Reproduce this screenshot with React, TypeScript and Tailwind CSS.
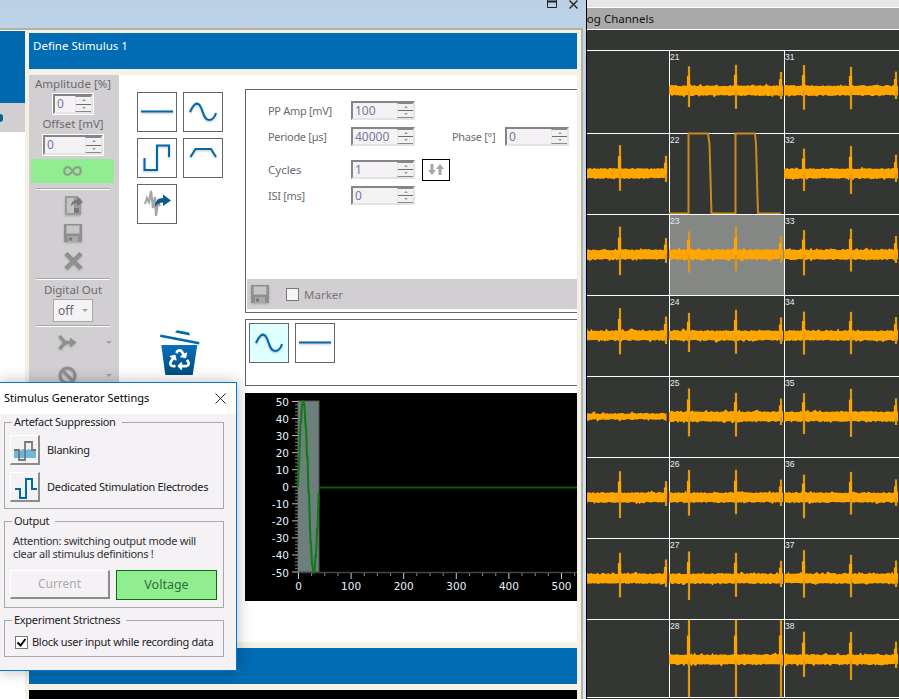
import React from 'react';
import { FaRecycle } from 'react-icons/fa';

const BLUE = '#0068ad';

// seeded noise so that every channel keeps the same trace between renders
const rng = (seed: number) => {
  let s = seed * 9301 + 49297;
  return () => {
    s = (s * 9301 + 49297) % 233280;
    return s / 233280;
  };
};

const bandPath = (seed: number, from: number, to: number, y: number, half: number) => {
  const r = rng(seed);
  const top: string[] = [];
  const bottom: string[] = [];
  for (let x = from; x <= to; x += 1.5) {
    const bump = r() > 0.9 ? 1.5 : 0;
    top.push(`${x} ${(y - half - r() * 1.4 - bump).toFixed(1)}`);
    bottom.push(`${x} ${(y + half + r() * 1.4 + (r() > 0.92 ? 1.5 : 0)).toFixed(1)}`);
  }
  return `M${top.join('L')}L${bottom.reverse().join('L')}Z`;
};

const Trace = ({ seed, spikes, from, to, flat, huge }: { seed: number; spikes: number[]; from: number; to: number; flat?: boolean; huge?: boolean }) => {
  const r = rng(seed + 7);
  return (
    <svg width="100%" height="100%" className="block overflow-visible">
      <path d={bandPath(seed, from, to, 39.5, flat ? 2.4 : 4.2)} fill="#ffa500" />
      {spikes.map((x, i) => {
        const last = i === spikes.length - 1 && x > 75;
        const up = huge ? 39 : last ? 15 + r() * 4 : 22 + r() * 6;
        const down = huge ? 38 : last ? 9 : 17 + r() * 5;
        return (
          <g key={x}>
            <path d={`M${x} ${39 - up}V${39 + down}`} stroke="#e0980f" strokeWidth="2.2" />
            <path d={`M${x - 0.5} ${39 - up * 0.6}V40`} stroke="#ffa500" strokeWidth="3.2" />
          </g>
        );
      })}
    </svg>
  );
};

const DigitalTrace = () => (
  <svg width="100%" height="100%" className="block overflow-visible">
    <path
      d="M-1 79.5H18.5V-0.5H38L39.5 10L41.5 79.5H65.5V-0.5H85L86 10L88 79.5H111"
      fill="none"
      stroke="#c98a1c"
      strokeWidth="2"
    />
  </svg>
);

const rowHeights = [83, 81, 81, 81, 81, 81, 81, 78];

const Channel = ({ n, col, row, active }: { n?: number; col: number; row: number; active?: boolean }) => {
  const spikes = col === 0 ? [33, 79] : [19, 66, 111];
  const empty = col === 0 && (row === 0 || row === 7);
  return (
    <div
      className={`relative border-t border-white ${col > 0 ? 'border-l' : ''} ${active ? 'bg-[#858785]' : ''}`}
      style={{ height: rowHeights[row] }}
    >
      {n === 22 ? (
        <DigitalTrace />
      ) : empty ? null : (
        <Trace
          seed={row * 31 + col * 17 + 3}
          spikes={col === 0 && row === 4 ? [] : spikes}
          from={col === 0 ? 0 : -1}
          to={col === 0 ? 80 : 114}
          flat={col === 0 && row === 4}
          huge={n === 28}
        />
      )}
      {n && <span className="absolute left-[0px] top-[1px] font-['Liberation_Sans',sans-serif] text-[8.5px] leading-[11px] text-[#e6eef5]">{n}</span>}
    </div>
  );
};

const Spin = ({ value, w, white }: { value: string; w: number; white?: boolean }) => (
  <div
    className={`flex h-full border-2 border-t-[#858585] border-l-[#858585] border-r-[#e4e4e4] border-b-[#e4e4e4] ${white ? 'outline outline-white' : ''}`}
    style={{ width: w }}
  >
    <div className="flex-1 bg-[#f5f2f6] pl-[2px] text-[12px] leading-[15px] tracking-normal text-[#77779a]">{value}</div>
    <div className="flex w-[16px] flex-col border-y border-l border-[#8a8a8a] border-l-[#e8e8e8] bg-[#f2f0f2]">
      <div className="flex flex-1 items-center justify-center border-b border-[#6e6e6e]">
        <div className="h-0 w-0 border-x-[2px] border-b-[2px] border-x-transparent border-b-[#999]" />
      </div>
      <div className="flex flex-1 items-center justify-center">
        <div className="h-0 w-0 border-x-[2px] border-t-[2px] border-x-transparent border-t-[#999]" />
      </div>
    </div>
  </div>
);

const WaveBtn = ({ children, active }: { children: React.ReactNode; active?: boolean }) => (
  <div className={`h-[40px] w-[40px] border border-[#666] ${active ? 'bg-[#e0ffff]' : 'bg-white'}`}>
    <svg width="38" height="38" viewBox="1 1 38 38" fill="none" stroke={BLUE} strokeWidth="2" className="drop-shadow-[0_1px_1px_rgba(0,0,0,0.25)]">
      {children}
    </svg>
  </div>
);

const lineIcon = <path d="M4 19.5H36" />;
const sineIcon = <path d="M7 20C10 13 13 10 16 12.5C20 16 20 28 26 28C29 28 32 25 33 21" />;
const squareIcon = <path d="M7.5 20V32H20V7.5H32V19" />;
const trapIcon = <path d="M7.5 19L12.5 11H28L33 19" />;

const soft = 'drop-shadow-[0_1px_1px_rgba(0,0,0,0.2)]';

const Floppy = ({ className }: { className?: string }) => (
  <svg width="18" height="18" viewBox="0 0 18 18" className={`${soft} ${className ?? ''}`}>
    <rect width="18" height="18" fill="#8f8f8f" />
    <rect x="2.5" y="1.5" width="13" height="8" fill="#c6c6c8" />
    <rect x="4" y="12" width="10" height="6" fill="#a8a8a8" />
    <rect x="5" y="13.5" width="3" height="3" fill="#777" />
  </svg>
);

const SmallArrow = () => <div className="h-0 w-0 border-x-[3px] border-t-[3px] border-x-transparent border-t-[#a2a2a2]" />;

const Separator = () => <div className="h-[2px] w-[74px] border-t border-[#a8a8a8] bg-white" />;

const Sidebar = () => (
  <div className="flex w-[90px] shrink-0 flex-col items-center bg-[#d1cfd2] pr-[2px] pt-[2px] text-[11.5px] leading-[14px] text-[#6d6a6f]">
    <div>Amplitude [%]</div>
    <div className="mt-[3px] h-[20px]"><Spin value="0" w={40} white /></div>
    <div className="mt-[3px]">Offset [mV]</div>
    <div className="mt-[4px] h-[20px]"><Spin value="0" w={60} white /></div>
    <div className="ml-[2px] mt-[4px] flex h-[24px] w-[83px] items-center justify-center self-start bg-[#90ee90]">
      <svg width="19" height="10" viewBox="0 0 19 10" fill="none" stroke="#8f9f8f" strokeWidth="2.2">
        <path d="M9.5 5C7.5 2 6.5 1.2 5 1.2C2.8 1.2 1.2 2.8 1.2 5S2.8 8.8 5 8.8C6.5 8.8 7.5 8 9.5 5C11.5 2 12.5 1.2 14 1.2C16.2 1.2 17.8 2.8 17.8 5S16.2 8.8 14 8.8C12.5 8.8 11.5 8 9.5 5Z" />
      </svg>
    </div>
    <div className="mt-[5px]"><Separator /></div>
    <svg width="19" height="21" viewBox="0 0 19 21" className={`mt-[5px] ${soft}`}>
      <path d="M1 1H13L17 4V20H1Z" fill="#9a9a9a" />
      <path d="M3 3H10V18H3Z" fill="#c4c4c6" />
      <path d="M7 11C7 7 10 5 13 5V2L19 7L13 11V8C11 8 9 9 7 11Z" fill="#777" />
      <rect x="10" y="13" width="5" height="5" fill="#777" />
    </svg>
    <Floppy className="mt-[8px]" />
    <svg width="19" height="18" viewBox="0 0 19 18" className={`mt-[10px] ${soft}`} stroke="#8f8f8f" strokeWidth="4.4">
      <path d="M2 1.5L17 16.5M17 1.5L2 16.5" />
    </svg>
    <div className="mt-[8px]"><Separator /></div>
    <div className="mt-[3px]">Digital Out</div>
    <div className="mt-[2px] flex h-[23px] w-[40px] items-center justify-between border border-[#a9a9a9] bg-[#f5f2f6] pl-[4px] pr-[4px]">
      <span className="text-[12px] text-[#6a6a6a]">off</span>
      <SmallArrow />
    </div>
    <div className="mt-[3px]"><Separator /></div>
    <div className="mt-[7px] flex w-full items-center pl-[29px]">
      <svg width="19" height="17" viewBox="0 0 19 17" fill="none" stroke="#8f8f8f" strokeWidth="3.4" className={soft}>
        <path d="M1.5 2L7 8.5L1.5 15M7 8.5H13" />
        <path d="M12 3.5L18.5 8.5L12 13.5Z" fill="#8f8f8f" stroke="none" />
      </svg>
      <div className="ml-[29px]"><SmallArrow /></div>
    </div>
    <div className="mt-[15px] flex w-full items-center pl-[29px]">
      <svg width="19" height="19" viewBox="0 0 19 19" fill="none" stroke="#8f8f8f" strokeWidth="3" className={soft}>
        <circle cx="9.5" cy="9.5" r="7.5" />
        <path d="M4.5 4.5L14.5 14.5" />
      </svg>
      <div className="ml-[29px]"><SmallArrow /></div>
    </div>
  </div>
);

const Row = ({ label, value, top, wide, children }: { label: string; value: string; top: number; wide?: boolean; children?: React.ReactNode }) => (
  <div className="flex h-[19px] shrink-0 items-center text-[#6d6a6f]" style={{ marginTop: top }}>
    <div className={`w-[83px] pt-[1px] ${wide ? 'text-[11.5px]' : 'text-[11px] tracking-[-0.3px]'}`}>{label}</div>
    <Spin value={value} w={64} />
    {children}
  </div>
);

const StimulusPanel = () => (
  <div className="flex h-[224px] flex-col border-y border-l border-[#666] pl-[1px]">
    <div className="flex flex-col pl-[21px]">
      <Row label="PP Amp [mV]" value="100" top={11} />
      <Row label="Periode [µs]" value="40000" top={7}>
        <div className="ml-[37px] w-[53px] pt-[1px] text-[11px] tracking-[-0.3px]">Phase [°]</div>
        <Spin value="0" w={64} />
      </Row>
      <Row label="Cycles" value="1" top={14} wide>
        <div className="ml-[7px] flex h-[22px] w-[28px] items-center justify-center border border-black">
          <svg width="16" height="11" viewBox="0 0 16 11" fill="#a8a8a8">
            <path d="M2.5 0H5.5V6H8L4 11L0 6H2.5Z" />
            <path d="M10.5 11H13.5V5H16L12 0L8 5H10.5Z" />
          </svg>
        </div>
      </Row>
      <Row label="ISI [ms]" value="0" top={7} />
    </div>
    <div className="mb-[3px] mt-auto flex h-[30px] items-center bg-[#d1cfd2] pl-[4px]">
      <Floppy />
      <div className="ml-[17px] h-[13px] w-[13px] border border-[#777] bg-[#f5f5f5]" />
      <span className="ml-[5px] pt-[1px] text-[11.5px] text-[#787578]">Marker</span>
    </div>
  </div>
);

const sineY = (x: number) => 94 - 85.5 * Math.sin((Math.round(x * 1.4) / 1.4 / 21) * Math.PI * 2);
const sinePoints = Array.from({ length: 43 }, (_, i) => `${(53 + i / 2).toFixed(1)},${sineY(i / 2).toFixed(1)}`).join(' ');
const yTicks = [50, 40, 30, 20, 10, 0, -10, -20, -30, -40, -50];
const xTicks = [0, 100, 200, 300, 400, 500];

const Chart = () => (
  <div className="mt-[7px] h-[208px] bg-black">
    <svg width="332" height="208" className="block font-['DejaVu_Sans',sans-serif] text-[10.5px]">
      <rect x="53" y="8" width="21" height="171" fill="#6c7f7c" stroke="#555" />
      <path d="M53 179.5H332" stroke="#444" strokeWidth="1.5" />
      <path d="M53.5 8V180" stroke="#777" />
      {Array.from({ length: 51 }, (_, i) => (
        <path key={i} d={`M${i % 5 === 0 ? 47 : 50} ${8.5 + i * 3.41}H53`} stroke={i % 5 === 0 ? '#bbb' : '#777'} />
      ))}
      {Array.from({ length: 22 }, (_, i) => (
        <path key={i} d={`M${53.5 + i * 13.15} 180V${i % 4 === 0 ? 186 : 183}`} stroke={i % 4 === 0 ? '#ccc' : '#888'} />
      ))}
      {yTicks.map((v, i) => (
        <text key={v} x="44" y={12.5 + i * 17.1} textAnchor="end" fill="#eaf2ff">{v}</text>
      ))}
      {xTicks.map((v, i) => (
        <text key={v} x={53.5 + i * 52.6} y="197" textAnchor="middle" fill="#eaf2ff">{v}</text>
      ))}
      <polyline points={sinePoints} fill="none" stroke="#0b7d12" strokeWidth="2" />
      <path d="M74 94.5H332" stroke="#0a5c0a" strokeWidth="2" />
    </svg>
  </div>
);

const Trash = () => (
  <svg width="40" height="46" viewBox="0 0 40 46" className="ml-[23px] mt-[106px]">
    <defs>
      <linearGradient id="bin" x1="0" y1="0" x2="0" y2="1">
        <stop offset="0" stopColor="#0a70ba" />
        <stop offset="1" stopColor="#014e80" />
      </linearGradient>
    </defs>
    <path d="M0.5 4.5L39.5 12L39 14.5L0 7Z" fill={BLUE} />
    <path d="M15 2.5L17 0.3L29 2.5L30 5.5Z" fill={BLUE} />
    <path d="M1.3 15H37.3L32.7 45H5.3Z" fill="url(#bin)" />
    <FaRecycle x={9} y={19} size={21} color="#fff" />
  </svg>
);

const Group = ({ title, className, children }: { title: string; className: string; children: React.ReactNode }) => (
  <fieldset className={`border border-[#a8a8a8] ${className}`}>
    <legend className="ml-[7px] pl-[2px] pr-[6px] leading-[14px] text-[#222]">{title}</legend>
    {children}
  </fieldset>
);

const RaisedBtn = ({ children }: { children: React.ReactNode }) => (
  <div className="h-[30px] w-[30px] border border-b-2 border-r-2 border-white border-b-[#8c8c8c] border-r-[#8c8c8c] bg-[#f5f2f6]">
    <svg width="28" height="28" viewBox="1 1 28 28" fill="none">{children}</svg>
  </div>
);

const SettingsDialog = () => (
  <div className="absolute left-[-1px] top-[382px] w-[238px] border border-[#0078d7] bg-[#f5f2f6] font-['Noto_Sans',sans-serif] text-[11px] tracking-[-0.3px] text-[#222] shadow-[0_0_14px_rgba(0,0,0,0.28)]">
    <div className="flex h-[31px] items-center justify-between bg-white pl-[4px] pr-[10px]">
      <span className="tracking-normal text-black">Stimulus Generator Settings</span>
      <svg width="11" height="11" viewBox="0 0 11 11" stroke="#222" strokeWidth="1">
        <path d="M0.5 0.5L10.5 10.5M10.5 0.5L0.5 10.5" />
      </svg>
    </div>
    <div className="flex flex-col gap-[5px] pb-[13px] pl-[4px] pr-[12px] pt-[1px]">
      <Group title="Artefact Suppression" className="h-[94px]">
        <div className="mt-[6px] flex items-center pl-[5px]">
          <RaisedBtn>
            <path d="M4 15L7 14L10 15.5L13 14L16 15L19 14L22 15L26 14V23H4Z" fill="#6fb8d8" />
            <path d="M4 15H9V25H15V7H22V15H26" stroke="#777" strokeWidth="1.8" />
          </RaisedBtn>
          <span className="ml-[7px] pt-[1px]">Blanking</span>
        </div>
        <div className="mt-[7px] flex items-center pl-[5px]">
          <RaisedBtn>
            <path d="M5 17H10V26H16V7H22V17H27" stroke={BLUE} strokeWidth="2" />
          </RaisedBtn>
          <span className="ml-[7px] whitespace-nowrap pt-[1px]">Dedicated Stimulation Electrodes</span>
        </div>
      </Group>
      <Group title="Output" className="h-[94px]">
        <div className="mt-[6px] pl-[8px] leading-[13px] text-[#333]">
          Attention: switching output mode will<br />clear all stimulus definitions !
        </div>
        <div className="mt-[10px] flex gap-[6px] pl-[5px] tracking-normal">
          <div className="flex h-[29px] w-[100px] items-center justify-center border border-b-2 border-r-2 border-white border-b-[#8c8c8c] border-r-[#8c8c8c] text-[12px] text-[#aaa]">Current</div>
          <div className="flex h-[30px] w-[101px] items-center justify-center border border-[#0f6b0f] bg-[#90ee90] pt-[1px] text-[12.5px] text-[#2f6f3a]">Voltage</div>
        </div>
      </Group>
      <Group title="Experiment Strictness" className="h-[44px]">
        <div className="mt-[7px] flex items-center pl-[10px]">
          <div className="flex h-[13px] w-[13px] shrink-0 items-center justify-center border border-[#777] bg-white">
            <svg width="11" height="11" viewBox="0 0 11 11" fill="none" stroke="#000" strokeWidth="2">
              <path d="M1.5 5.5L4.5 8.5L9.5 2" />
            </svg>
          </div>
          <span className="ml-[4px] whitespace-nowrap">Block user input while recording data</span>
        </div>
      </Group>
    </div>
  </div>
);

const LeftWindow = () => (
  <div className="flex w-[586px] shrink-0 flex-col overflow-hidden bg-gradient-to-b from-[#bdd1e6] to-[#d8e8f8] font-['Noto_Sans',sans-serif]">
    <div className="flex h-[28px] shrink-0 items-start justify-end gap-[12px] pr-[8px]">
      <svg width="10" height="8" viewBox="0 0 10 8" fill="none" stroke="#222" strokeWidth="1"><path d="M0.5 0V7.5H9.5V0" /><path d="M0 1.5H10" strokeWidth="2" /></svg>
      <svg width="9" height="9" viewBox="0 0 9 9" stroke="#222" strokeWidth="1.4"><path d="M0.5 0.5L8.5 8.5M8.5 0.5L0.5 8.5" /></svg>
    </div>
    <div className="mr-[3px] flex h-[671px] border-r-2 border-t-2 border-[#b8b09c] bg-white">
      <div className="flex w-[25px] shrink-0 flex-col pt-[1px]">
        <div className="h-[72px] bg-[#0068ad]" />
        <div className="flex h-[29px] items-center bg-[#d1cfd2]">
          <div className="h-[8px] w-[3px] rounded-r bg-[#0a5f94]" />
        </div>
      </div>
      <div className="flex min-w-0 flex-1 flex-col bg-[#f5f1e6] px-[4px] pt-[3px]">
        <div className="h-[36px] shrink-0 bg-[#006cb3] pl-[4px] pt-[5px] text-[11.5px] leading-[16px] text-white">Define Stimulus 1</div>
        <div className="mt-[6px] flex h-[567px] shrink-0 bg-white">
          <Sidebar />
          <div className="w-[126px] shrink-0 pl-[18px] pt-[17px]">
            <div className="grid w-[86px] grid-cols-2 gap-[6px]">
              <WaveBtn>{lineIcon}</WaveBtn>
              <WaveBtn>{sineIcon}</WaveBtn>
              <WaveBtn>{squareIcon}</WaveBtn>
              <WaveBtn>{trapIcon}</WaveBtn>
              <div className="h-[40px] w-[40px] border border-[#666]">
                <svg width="38" height="38" viewBox="1 1 38 38">
                  <path d="M8 20L10 14L12 18L14 7L16 24L18 13L19 32L21 18L23 22" fill="none" stroke="#a5a5a5" strokeWidth="2.2" />
                  <path d="M18 23C18 17 21 14 26 14V10.5L34 16.5L26 22V18.5C23 18.5 20 20 18 23Z" fill="#0a5a8e" />
                </svg>
              </div>
            </div>
            <Trash />
          </div>
          <div className="min-w-0 flex-1 overflow-hidden pt-[14px]">
            <StimulusPanel />
            <div className="mt-[6px] flex h-[67px] gap-[6px] border-y border-l border-[#666] pl-[3px] pt-[3px]">
              <WaveBtn active>{sineIcon}</WaveBtn>
              <WaveBtn>{lineIcon}</WaveBtn>
            </div>
            <Chart />
          </div>
        </div>
        <div className="mt-[6px] h-[36px] shrink-0 bg-[#006cb3]" />
        <div className="mt-[6px] h-[20px] shrink-0 bg-black" />
      </div>
    </div>
  </div>
);

const ChannelsPanel = () => (
  <div className="flex min-w-0 flex-1 flex-col overflow-hidden border-l border-black bg-[#343634]">
    <div className="h-[7px] shrink-0 bg-[#e6e6e6]" />
    <div className="flex h-[23px] shrink-0 items-center overflow-hidden whitespace-nowrap border-y border-white bg-[#aba8a9] font-['Noto_Sans',sans-serif] text-[11.5px] text-[#111]">
      <span className="-ml-[24px]">Analog Channels</span>
    </div>
    <div className="h-[20px] shrink-0" />
    <div className="grid grid-cols-[82px_115px_115px] content-start">
      {rowHeights.map((_, row) => (
        <React.Fragment key={row}>
          <Channel col={0} row={row} />
          <Channel col={1} row={row} n={21 + row} active={row === 2} />
          <Channel col={2} row={row} n={31 + row} />
        </React.Fragment>
      ))}
      <div className="col-span-3 border-t border-white" />
    </div>
  </div>
);

export default function App() {
  return (
    <div className="relative flex h-[699px] w-[899px] overflow-hidden bg-white">
      <LeftWindow />
      <ChannelsPanel />
      <SettingsDialog />
    </div>
  );
}
